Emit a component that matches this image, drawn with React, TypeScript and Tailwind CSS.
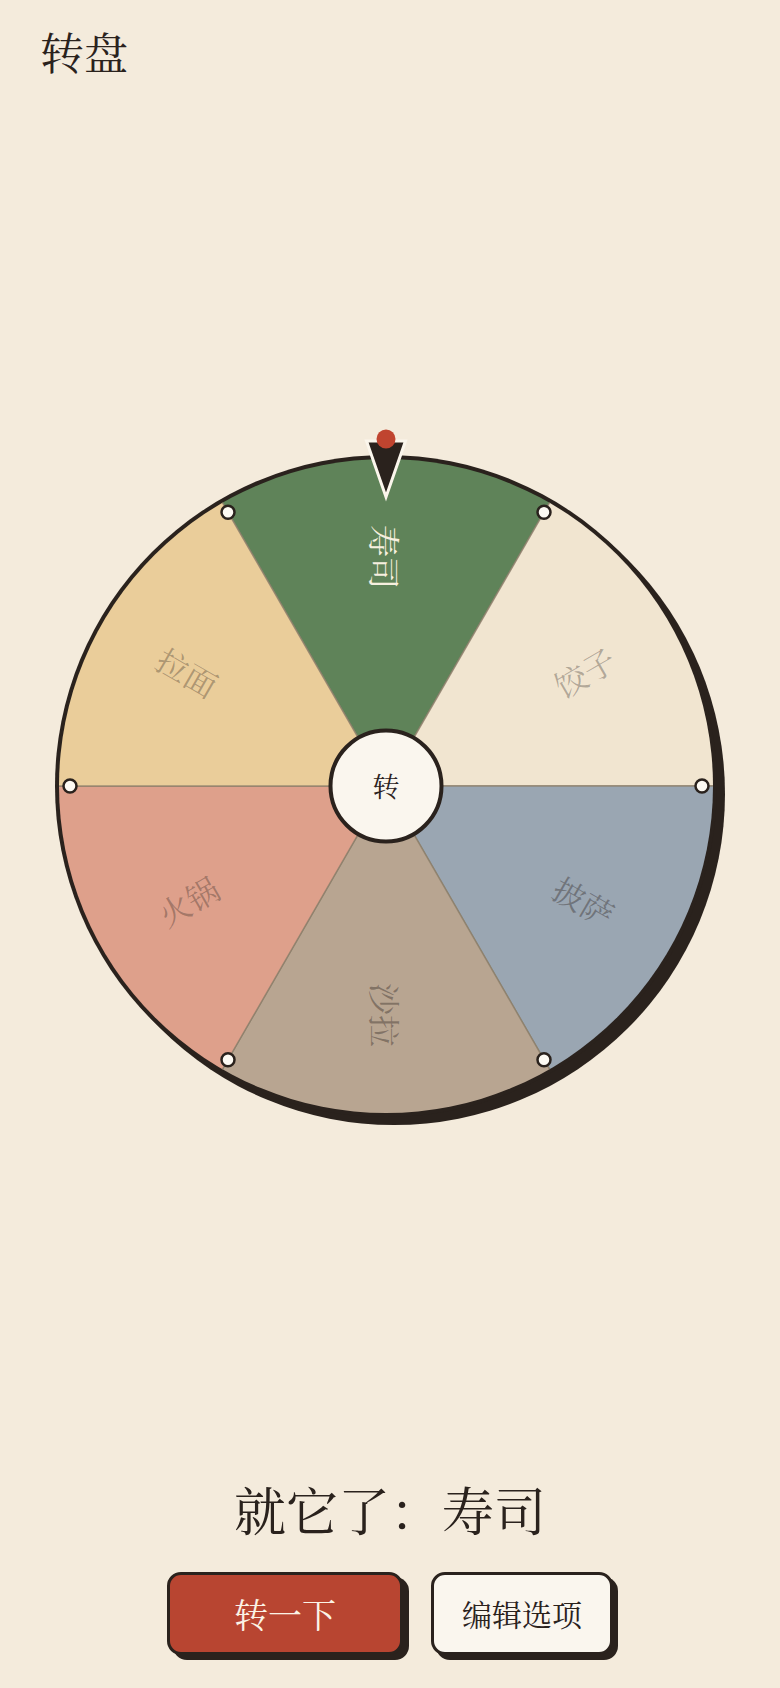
import React from 'react';

const INK = '#2a221d';
const FONT = '"Noto Serif CJK SC", "Liberation Serif", "Noto Sans CJK SC", serif';

interface Slice {
  label: string;
  color: string;
  text: string;
  textOpacity: number;
}

// clockwise from the top
const slices: Slice[] = [
  { label: '寿司', color: '#5f8359', text: '#f6efdf', textOpacity: 1 },
  { label: '饺子', color: '#f1e5d0', text: INK, textOpacity: 0.33 },
  { label: '披萨', color: '#9aa6b2', text: INK, textOpacity: 0.38 },
  { label: '沙拉', color: '#b8a591', text: INK, textOpacity: 0.38 },
  { label: '火锅', color: '#dea08b', text: INK, textOpacity: 0.33 },
  { label: '拉面', color: '#eacd9a', text: INK, textOpacity: 0.33 },
];

const OUTER = 331;
const R = 327;
const LABEL_R = 229;
const DOT_R = 316;

const pt = (deg: number, r: number) => {
  const a = (deg * Math.PI) / 180;
  return [r * Math.sin(a), -r * Math.cos(a)];
};

// keep labels readable: run along the radius, flipped when upside down
const labelRotation = (deg: number) => {
  let rot = deg - 90;
  if (rot <= -90) rot += 180;
  if (rot > 90) rot -= 180;
  return rot;
};

const Wheel: React.FC = () => {
  const step = 360 / slices.length;
  return (
    <div className="relative w-[662px] h-[662px]">
      <svg width="672" height="672" viewBox="-331 -331 672 672" className="block overflow-visible">
        <defs>
          <clipPath id="wheel-face">
            <circle r={R} />
          </clipPath>
        </defs>
        <circle cx="8" cy="8" r={OUTER} fill={INK} />
        <circle r={OUTER} fill={INK} />
        <g clipPath="url(#wheel-face)">
          {slices.map((s, i) => {
            const c = i * step;
            const [x1, y1] = pt(c - step / 2, R + 3);
            const [x2, y2] = pt(c + step / 2, R + 3);
            return (
              <path
                key={s.label}
                d={`M0 0 L${x1} ${y1} A${R + 3} ${R + 3} 0 0 1 ${x2} ${y2} Z`}
                fill={s.color}
                stroke="#8c7f6c"
                strokeWidth="1.5"
                strokeOpacity="0.8"
              />
            );
          })}
        </g>
        {slices.map((s, i) => {
          const c = i * step;
          const [x, y] = pt(c, LABEL_R);
          return (
            <text
              key={s.label}
              transform={`translate(${x} ${y}) rotate(${labelRotation(c)})`}
              textAnchor="middle"
              dominantBaseline="central"
              fontSize="32"
              fill={s.text}
              fillOpacity={s.textOpacity}
              style={{ fontFamily: FONT }}
            >
              {s.label}
            </text>
          );
        })}
        {slices.map((s, i) => {
          const [x, y] = pt(i * step + step / 2, DOT_R);
          return <circle key={s.label} cx={x} cy={y} r="6.5" fill="#fdfaf3" stroke={INK} strokeWidth="2.5" />;
        })}
      </svg>

      {/* hub */}
      <div className="absolute left-1/2 top-1/2 -translate-x-1/2 -translate-y-1/2 w-[115px] h-[115px] rounded-full border-4 border-[#2a221d] bg-[#faf6ee] flex items-center justify-center">
        <span className="text-[27px] text-[#2a221d]">转</span>
      </div>

      {/* pointer */}
      <svg width="46" height="80" viewBox="0 0 46 80" className="absolute left-[308px] top-[-30px]">
        <polygon points="3.5,16 42.5,16 23,72" fill={INK} stroke="#fbf6ec" strokeWidth="3" strokeLinejoin="miter" />
        <circle cx="23" cy="14" r="9.5" fill="#c0442f" />
      </svg>
    </div>
  );
};

export default function App() {
  return (
    <div className="min-h-[1688px] w-full bg-[#f4ebdc] text-[#2a221d] flex flex-col" style={{ fontFamily: FONT }}>
      <header className="pt-[25px] px-10">
        <h1 className="text-[44px] leading-[52px] font-normal">转盘</h1>
      </header>

      <main className="mt-[378px] flex justify-center pr-2">
        <Wheel />
      </main>

      <p className="mt-[361px] text-center text-[52px] leading-[62px]">就它了：寿司</p>

      <div className="mt-[32px] flex justify-center gap-7">
        <button className="w-[236px] h-[83px] rounded-[14px] border-[3.5px] border-[#2a221d] bg-[#b84531] shadow-[6px_5px_0_#2a221d] text-[#fbf3e6] text-[34px]">
          转一下
        </button>
        <button className="w-[182px] h-[83px] rounded-[14px] border-[3.5px] border-[#2a221d] bg-[#faf6ee] shadow-[5px_5px_0_#2a221d] text-[#2a221d] text-[30px]">
          编辑选项
        </button>
      </div>
    </div>
  );
}
